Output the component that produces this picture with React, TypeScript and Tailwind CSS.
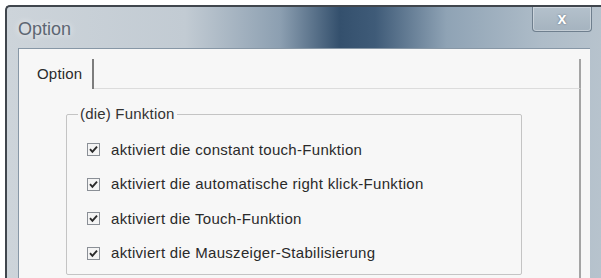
const options = [
  "aktiviert die constant touch-Funktion",
  "aktiviert die automatische right klick-Funktion",
  "aktiviert die Touch-Funktion",
  "aktiviert die Mauszeiger-Stabilisierung",
];

function CheckBox() {
  return (
    <span className="flex h-[13px] w-[13px] shrink-0 items-center justify-center border border-[#8a8f96] bg-[#f4f4f4]">
      <svg width="9" height="9" viewBox="0 0 9 9">
        <path d="M1 4.2 L3.4 6.8 L8 1.6" fill="none" stroke="#2a2a2a" strokeWidth="1.9" />
      </svg>
    </span>
  );
}

export default function App() {
  return (
    <div
      className="h-[278px] w-[601px] overflow-hidden bg-white pl-[5px] pt-[5px]"
      style={{ fontFamily: '"Liberation Sans", Arial, sans-serif' }}
    >
      <div className="flex h-[273px] w-[596px] flex-col rounded-tl-[5px] border-l-[2px] border-t-[2px] border-[#40464d] bg-[linear-gradient(90deg,#cdd4da_0%,#c2cbd3_30%,#8c9fb1_46%,#34506d_56%,#3f5b78_62%,#8fa3b5_74%,#aebcc8_90%,#b7c3cd_100%)]">
        {/* title bar */}
        <div className="flex h-[41px] shrink-0 items-start justify-between">
          <span className="pl-[11px] pt-[9px] text-[18px] text-[#5d6672] [text-shadow:0_0_6px_rgba(255,255,255,0.9)]">
            Option
          </span>
          <div className="mr-[9px] flex h-[25px] w-[60px] items-center justify-center rounded-b-[4px] border border-t-0 border-[#6f7f8e] bg-[linear-gradient(180deg,#b4c1cc,#a5b3bf)] shadow-[inset_0_0_0_1px_rgba(255,255,255,0.35)]">
            <span className="text-[16px] font-bold leading-none text-white [text-shadow:0_0_2px_#5a6675]">x</span>
          </div>
        </div>

        {/* client area */}
        <div className="flex flex-1 pl-[11px] pr-[11px]">
          <div className="flex flex-1 flex-col border-l border-t border-[#8797a6] bg-[#f7f7f7]">
            <div className="flex h-[40px] shrink-0 items-end">
              <div className="flex h-[30px] w-[75px] items-center border-r-2 border-[#7d7d7d] pl-[18px] text-[15px] tracking-[0.2px] text-[#2b2b2b]">
                Option
              </div>
              <div className="mr-[9px] h-[30px] flex-1 border-b border-r-2 border-[#dcdcdc] border-r-[#a4a4a4]" />
            </div>
            <div className="mr-[9px] flex flex-1 border-r-2 border-[#a4a4a4] pl-[47px]">
              <fieldset className="mt-[14px] h-[172px] w-[456px] rounded-[2px] border border-[#c4c4c4] pl-[20px] pr-[10px]">
                <legend className="-ml-[9px] px-[2px] text-[15px] tracking-[0.2px] text-[#333]">(die) Funktion</legend>
                <div className="flex flex-col pt-[7px]">
                  {options.map((label) => (
                    <div key={label} className="flex h-[34.5px] items-center gap-[11px]">
                      <CheckBox />
                      <span className="text-[15px] tracking-[0.3px] text-[#2a2a2a]">{label}</span>
                    </div>
                  ))}
                </div>
              </fieldset>
            </div>
          </div>
        </div>
      </div>
    </div>
  );
}
